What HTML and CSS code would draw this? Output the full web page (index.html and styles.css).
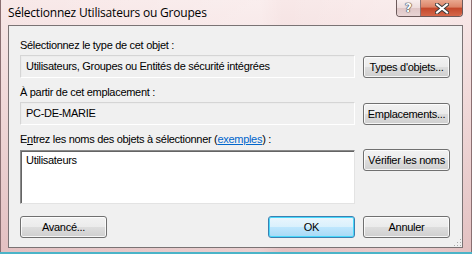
FILE: index.html
```html
<!DOCTYPE html>
<html lang="fr">
<head>
<meta charset="utf-8">
<title>Sélectionnez Utilisateurs ou Groupes</title>
<link rel="stylesheet" href="styles.css">
</head>
<body>
<div class="window">
  <div class="titlebar">
    <span class="title">Sélectionnez Utilisateurs ou Groupes</span>
    <div class="caption-btns">
      <span class="cbtn help">?</span>
      <span class="cbtn close"><svg width="14" height="11" viewBox="0 0 14 11"><path d="M2 1.5 L12 9.5 M12 1.5 L2 9.5" stroke="#3a3a3a" stroke-width="4" stroke-linecap="square"/><path d="M2 1.5 L12 9.5 M12 1.5 L2 9.5" stroke="#fff" stroke-width="2" stroke-linecap="square"/></svg></span>
    </div>
  </div>
  <div class="client">
    <div class="label">Sélectionnez le type de cet objet :</div>
    <div class="row">
      <div class="field">Utilisateurs, Groupes ou Entités de sécurité intégrées</div>
      <button class="btn">Types d'objets...</button>
    </div>
    <div class="label">À partir de cet emplacement :</div>
    <div class="row">
      <div class="field">PC-DE-MARIE</div>
      <button class="btn">Emplacements...</button>
    </div>
    <div class="label">E<u>n</u>trez les noms des objets à sélectionner (<a href="#" class="link">exemples</a>) :</div>
    <div class="row row-top">
      <div class="textarea">Utilisateurs</div>
      <button class="btn">Vérifier les noms</button>
    </div>
    <div class="footer">
      <button class="btn">Avancé...</button>
      <div class="footer-right">
        <button class="btn btn-default">OK</button>
        <button class="btn">Annuler</button>
      </div>
    </div>
    <span class="grip"></span>
  </div>
</div>
</body>
</html>
```

FILE: styles.css
```css
* { box-sizing: border-box; }
html, body { margin: 0; padding: 0; }
body { width: 472px; height: 254px; overflow: hidden; background: #d9b9bb; }

.window {
  width: 472px;
  height: 254px;
  padding: 0 9px 6px 8px;
  display: flex;
  flex-direction: column;
  background:
    linear-gradient(90deg, rgba(255,255,255,0) 0%, rgba(255,255,255,0.25) 55%, rgba(255,255,255,0) 60%, rgba(255,255,255,0.2) 85%, rgba(255,255,255,0) 100%),
    linear-gradient(180deg, #f8e8e8 0%, #f0d8d8 40%, #e3c0c1 100%);
  box-shadow: inset 0 -2px 0 #4bb4c8, inset 1px 0 0 #8a6f71, inset -1px 0 0 #8a6f71;
}

.titlebar {
  height: 25px;
  display: flex;
  align-items: flex-start;
  flex-shrink: 0;
}
.title {
  font-family: "Open Sans", "Noto Sans", sans-serif;
  font-size: 12px;
  color: #000;
  line-height: 14px;
  padding-top: 6px;
  letter-spacing: -0.2px;
}
.caption-btns {
  margin-left: auto;
  display: flex;
  height: 17px;
  border: 1px solid #6c5a5b;
  border-top: none;
  border-radius: 0 0 4px 4px;
  overflow: hidden;
}
.cbtn {
  display: flex;
  align-items: center;
  justify-content: center;
  height: 16px;
}
.help {
  width: 24px;
  background: linear-gradient(180deg, #f8eeee 0%, #eddcdc 50%, #dfc6c6 51%, #e8d4d4 100%);
  border-right: 1px solid #8e7475;
  font-family: "DejaVu Sans", sans-serif;
  font-weight: bold;
  font-size: 12px;
  color: #fff;
  text-shadow: 0 0 1px #333, 0 0 1px #333, 0 0 1px #333;
}
.close {
  width: 41px;
  background: linear-gradient(180deg, #e9a890 0%, #dc8367 45%, #c3472a 50%, #d5674a 100%);
}

.client {
  position: relative;
  flex: 1;
  background: #f0f0f0;
  border: 1px solid #7a7374;
  padding: 12px 12px 0 11px;
  font-family: "Liberation Sans", Arial, sans-serif;
  font-size: 11px;
  letter-spacing: -0.3px;
  color: #000;
}

.label {
  height: 14px;
  line-height: 14px;
  margin-bottom: 3px;
}
.label u { text-decoration: underline; }
.link { color: #0066cc; text-decoration: underline; }

.row {
  display: grid;
  grid-template-columns: 335px 87px;
  column-gap: 8px;
  align-items: center;
  margin-bottom: 7px;
}
.row-top { align-items: start; margin-bottom: 12px; }

.field {
  height: 23px;
  line-height: 21px;
  padding: 0 5px;
  background: #f0f0f0;
  border: 1px solid;
  border-color: #d5d5d5 #ffffff #ffffff #d5d5d5;
  box-shadow: inset 1px 1px 0 #ececec;
  white-space: nowrap;
}

.textarea {
  height: 54px;
  margin-top: 1px;
  padding: 2px 5px;
  background: #fff;
  border: 1px solid;
  border-color: #8a8a8a #e3e3e3 #e3e3e3 #8a8a8a;
  box-shadow: inset 1px 1px 0 #646464;
  line-height: 14px;
}

.btn {
  height: 22px;
  width: 87px;
  padding: 0;
  font-family: "Liberation Sans", Arial, sans-serif;
  font-size: 11px;
  letter-spacing: -0.3px;
  color: #000;
  border: 1px solid #707070;
  border-radius: 3px;
  background: linear-gradient(180deg, #f2f2f2 0%, #ebebeb 50%, #dddddd 51%, #cfcfcf 100%);
  box-shadow: inset 0 0 0 1px rgba(255,255,255,0.8);
}
.btn-default {
  border-color: #3c7fb1;
  background: linear-gradient(180deg, #eaf6fd 0%, #d9f0fc 50%, #bee6fd 51%, #a7d9f5 100%);
  box-shadow: inset 0 0 0 1px #48d8fb;
}

.footer {
  display: flex;
  align-items: center;
}
.footer-right {
  margin-left: auto;
  display: flex;
  gap: 8px;
}

.grip {
  position: absolute;
  right: 1px;
  bottom: 1px;
  width: 8px;
  height: 8px;
  background: radial-gradient(circle, #a9a9a9 0.8px, transparent 1px) 0 0 / 3px 3px;
  clip-path: polygon(100% 0, 100% 100%, 0 100%);
}
```
